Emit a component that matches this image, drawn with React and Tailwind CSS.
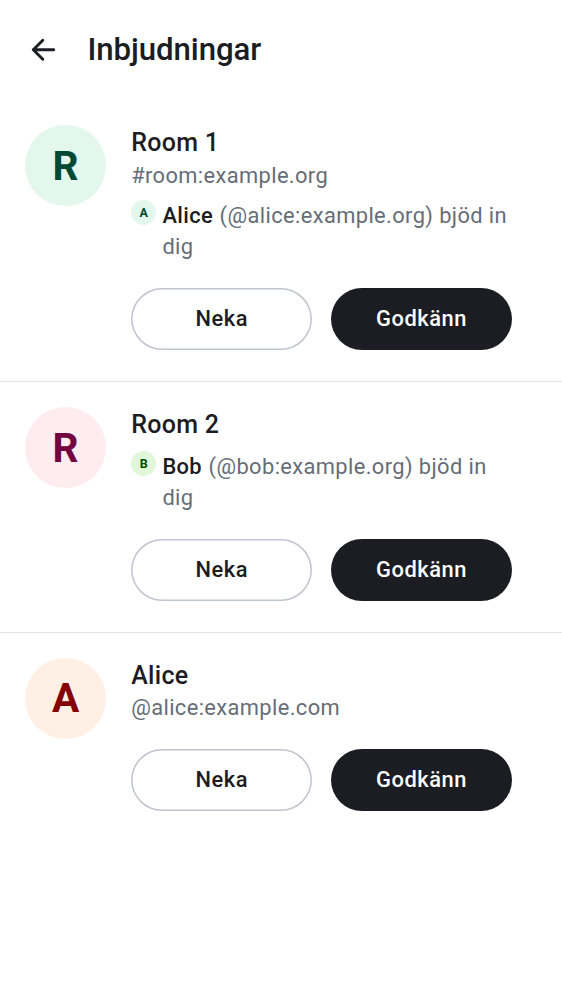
const invites = [
  { initial: 'R', avatar: 'bg-[#e3f7ed] text-[#004933]', name: 'Room 1', sub: '#room:example.org',
    sender: { initial: 'A', avatar: 'bg-[#e3f7ed] text-[#004933]', name: 'Alice', id: '@alice:example.org' } },
  { initial: 'R', avatar: 'bg-[#ffecf0] text-[#740040]', name: 'Room 2',
    sender: { initial: 'B', avatar: 'bg-[#e0f8d9] text-[#004d00]', name: 'Bob', id: '@bob:example.org' } },
  { initial: 'A', avatar: 'bg-[#ffefe4] text-[#850000]', name: 'Alice', sub: '@alice:example.com' },
];

function Invite({ item, last }) {
  return (
    <li className={`flex gap-[25px] pl-[25px] pr-[50px] pt-[25px] ${last ? '' : 'border-b border-[#e1e3e6] pb-[30.8px]'}`}>
      <div className={`flex size-[81.2px] shrink-0 items-center justify-center rounded-full pt-px text-[40.6px] font-bold leading-none ${item.avatar}`}>
        {item.initial}
      </div>
      <div className="min-w-0 flex-1">
        <h2 className="pt-[2px] text-[25px] font-medium leading-[32.4px] tracking-[0.3px]">{item.name}</h2>
        {item.sub && <p className="text-[21.86px] leading-[31.2px] tracking-[0.38px] text-[#656d77]">{item.sub}</p>}
        {item.sender && (
          <div className="mt-[9.3px] flex gap-[6.2px]">
            <div className={`flex size-[25px] shrink-0 items-center justify-center rounded-full pt-px text-[12.5px] font-bold leading-none ${item.sender.avatar}`}>
              {item.sender.initial}
            </div>
            <p className="text-[21.86px] leading-[31.2px] tracking-[0.39px] text-[#656d77]">
              <span className="mr-[0.7px] font-medium text-[#1b1d22]">{item.sender.name}</span> ({item.sender.id}) bjöd in dig
            </p>
          </div>
        )}
        <div className="mt-[25.3px] flex gap-[18.9px] text-[21.86px] font-medium tracking-[0.54px]">
          <button className="h-[62.4px] w-[181px] shrink-0 rounded-full pt-px shadow-[inset_0_0_0_1.56px_#c0c5cf]">Neka</button>
          <button className="h-[62.4px] w-[181px] shrink-0 rounded-full bg-[#1b1d22] pt-px text-white">Godkänn</button>
        </div>
      </div>
    </li>
  );
}

export default function App() {
  return (
    <main className="min-h-screen bg-white font-[Roboto,sans-serif] text-[#1b1d22]">
      <header className="flex h-[100.3px] items-center gap-[25px] pl-[25px]">
        <svg className="size-[37.5px]" viewBox="0 0 24 24" fill="none" stroke="currentColor" strokeWidth="1.85" strokeLinecap="round" strokeLinejoin="round">
          <path d="M11.4 5.9 5.3 12l6.1 6.1M5.3 12h13.1" />
        </svg>
        <h1 className="pt-[0.5px] text-[31.2px] font-medium tracking-[-0.08px]">Inbjudningar</h1>
      </header>
      <ul>
        {invites.map((item, i) => <Invite key={i} item={item} last={i === invites.length - 1} />)}
      </ul>
    </main>
  );
}
